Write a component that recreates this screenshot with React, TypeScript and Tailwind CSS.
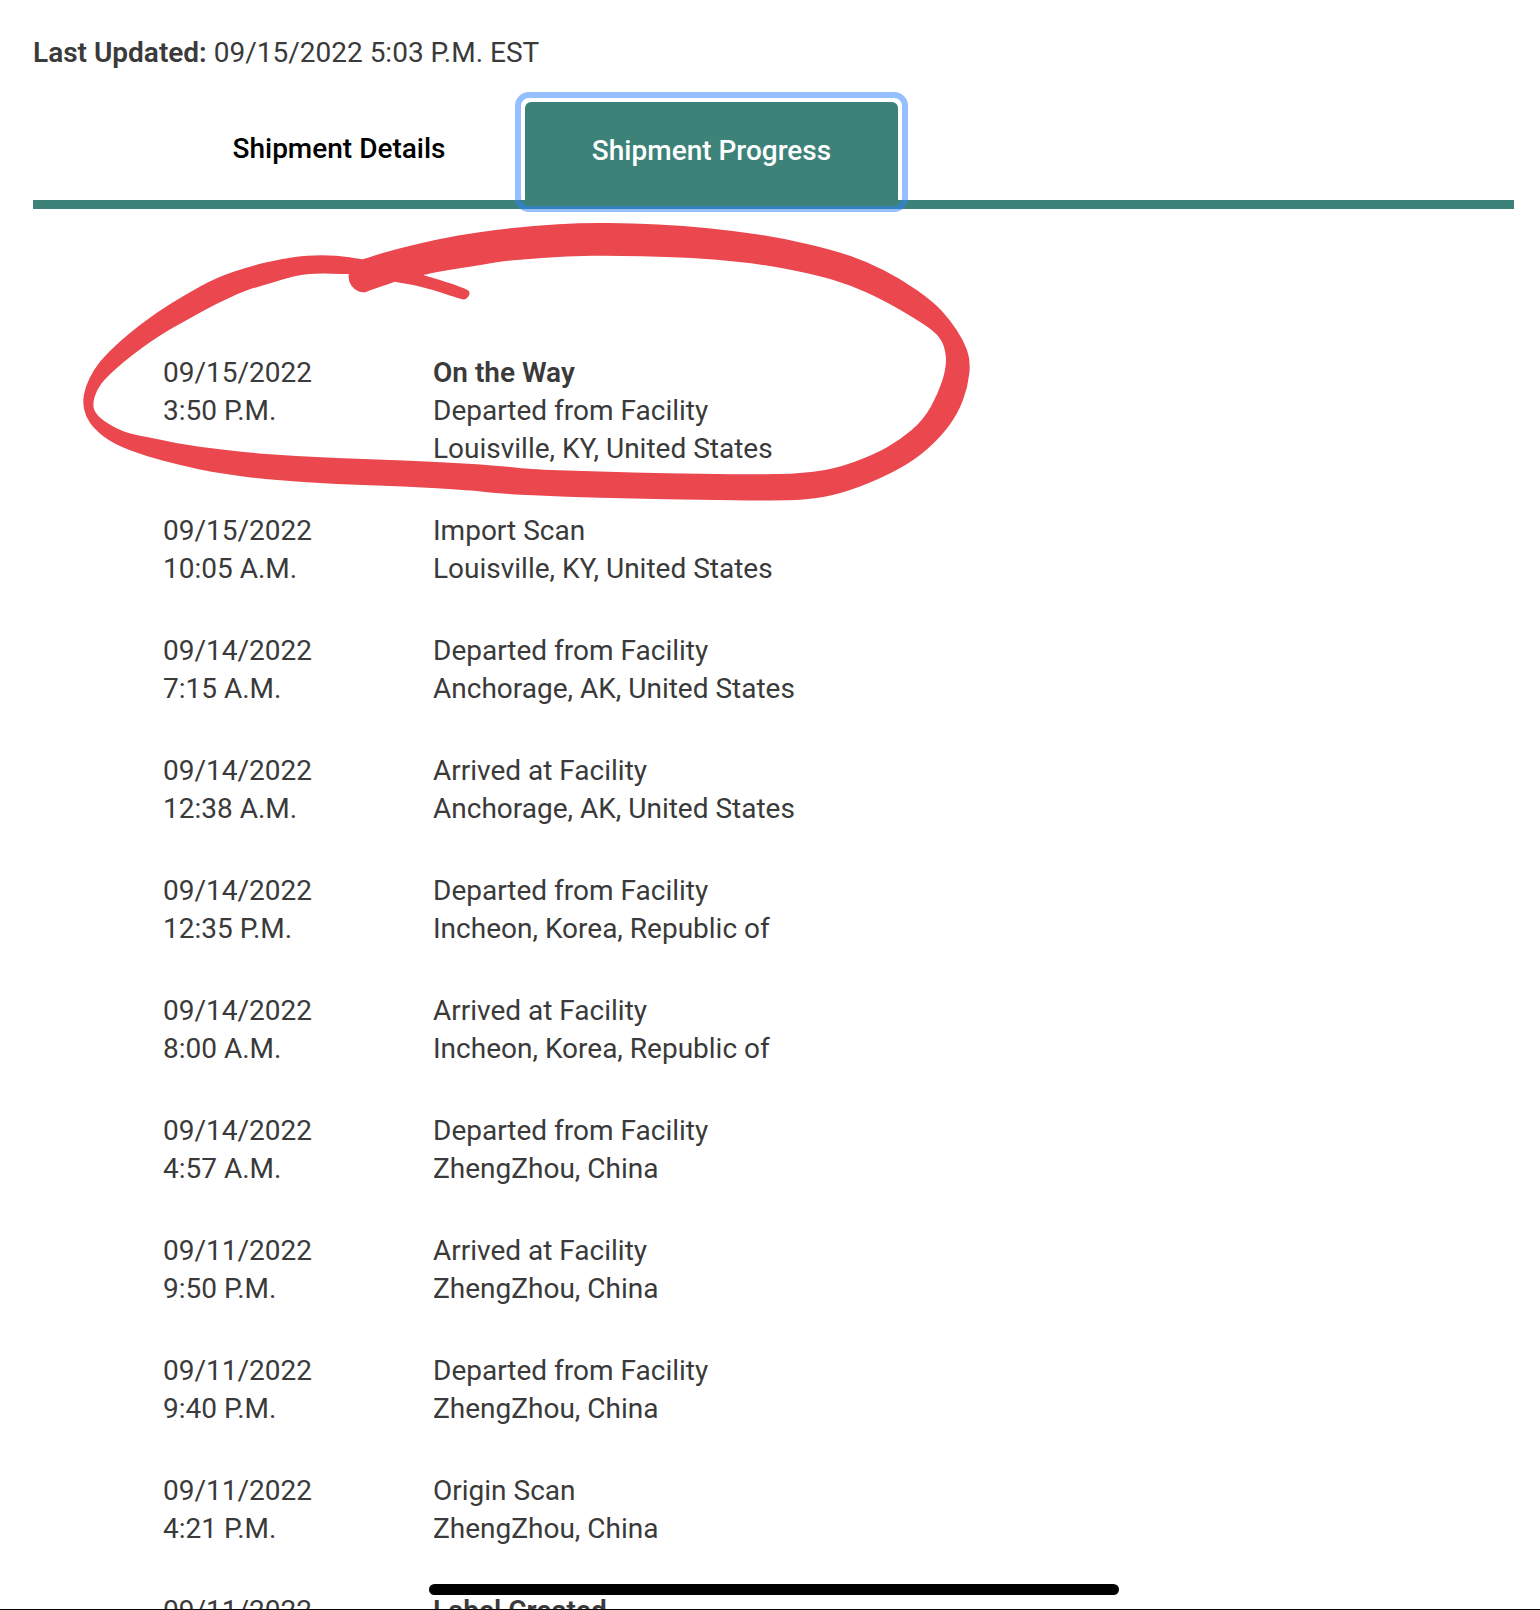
const events = [
  { date: '09/15/2022', time: '3:50 P.M.', title: 'On the Way', lines: ['Departed from Facility', 'Louisville, KY, United States'] },
  { date: '09/15/2022', time: '10:05 A.M.', lines: ['Import Scan', 'Louisville, KY, United States'] },
  { date: '09/14/2022', time: '7:15 A.M.', lines: ['Departed from Facility', 'Anchorage, AK, United States'] },
  { date: '09/14/2022', time: '12:38 A.M.', lines: ['Arrived at Facility', 'Anchorage, AK, United States'] },
  { date: '09/14/2022', time: '12:35 P.M.', lines: ['Departed from Facility', 'Incheon, Korea, Republic of'] },
  { date: '09/14/2022', time: '8:00 A.M.', lines: ['Arrived at Facility', 'Incheon, Korea, Republic of'] },
  { date: '09/14/2022', time: '4:57 A.M.', lines: ['Departed from Facility', 'ZhengZhou, China'] },
  { date: '09/11/2022', time: '9:50 P.M.', lines: ['Arrived at Facility', 'ZhengZhou, China'] },
  { date: '09/11/2022', time: '9:40 P.M.', lines: ['Departed from Facility', 'ZhengZhou, China'] },
  { date: '09/11/2022', time: '4:21 P.M.', lines: ['Origin Scan', 'ZhengZhou, China'] },
  { date: '09/11/2022', time: '', title: 'Label Created', lines: [] },
];

type Pt = [number, number];

// smooth closed outline through the points, a doubled point stays sharp
const smooth = (pts: Pt[]) => {
  const mid = (a: Pt, b: Pt): Pt => [(a[0] + b[0]) / 2, (a[1] + b[1]) / 2];
  let d = `M${mid(pts[pts.length - 1], pts[0]).join(' ')}`;
  pts.forEach((p, i) => {
    d += ` Q${p.join(' ')} ${mid(p, pts[(i + 1) % pts.length]).join(' ')}`;
  });
  return d + ' Z';
};

// red pen loop, 3 units to the pixel
const outer: Pt[] = [
  [878, 148], [878, 148], [960, 122], [1100, 88], [1230, 65], [1390, 47], [1540, 38], [1690, 40], [1840, 47],
  [1990, 62], [2140, 85], [2290, 120], [2390, 155], [2490, 205], [2590, 275], [2640, 330], [2680, 390],
  [2702, 450], [2694, 530], [2664, 610], [2612, 682], [2532, 752], [2430, 807], [2310, 852], [2210, 870],
  [2090, 872], [1890, 869], [1690, 866], [1490, 861], [1290, 851], [1200, 841], [1000, 829], [800, 823],
  [600, 809], [450, 791], [330, 766], [230, 739], [130, 702], [72, 657], [46, 617], [38, 575], [46, 530],
  [72, 478], [108, 433], [168, 378], [258, 308], [348, 253], [438, 203], [548, 166], [640, 146], [710, 136],
  [800, 136],
];

const inner: Pt[] = [
  [1060, 195], [1060, 195], [1190, 235], [1202, 250], [1187, 270], [1170, 266], [1060, 230], [975, 215], [975, 215],
  [900, 241], [880, 249], [853, 240], [836, 215], [836, 192], [836, 192], [740, 190], [680, 195], [600, 220],
  [530, 240], [440, 280], [350, 330], [270, 375], [180, 440], [110, 500], [80, 540], [68, 580], [75, 610],
  [110, 640], [170, 670], [250, 685], [350, 705], [500, 725], [700, 740], [900, 748], [1100, 755], [1290, 768],
  [1390, 778], [1590, 785], [1790, 790], [1990, 793], [2170, 793], [2290, 778], [2410, 735], [2490, 690],
  [2560, 630], [2605, 550], [2630, 470], [2625, 410], [2600, 370], [2550, 335], [2440, 270], [2340, 225],
  [2240, 195], [2090, 165], [1940, 148], [1790, 140], [1640, 137], [1490, 138], [1340, 150], [1290, 155],
  [1200, 170], [1120, 182],
];

const App = () => {
  return (
    <div className="relative h-[1610px] overflow-hidden bg-white font-['Roboto',sans-serif] text-[28px] leading-[38px] text-[#3a3a3a]">
      <div className="pt-[34px] pr-[26px] pl-[33px]">
        <p>
          <span className="font-semibold">Last Updated:</span> 09/15/2022 5:03 P.M. EST
        </p>

        <div className="mt-[30px] flex h-[98px] pl-[120px]">
          <button type="button" className="w-[372px] pb-[4px] font-medium text-black">
            Shipment Details
          </button>
          <button type="button" className="relative w-[373px] rounded-t-[6px] bg-[#3c8279] font-medium text-white">
            Shipment Progress
            <span className="absolute -top-[10px] -right-[10px] -bottom-[12px] -left-[10px] z-10 rounded-[14px] border-[6px] border-blue-500/50" />
          </button>
        </div>
        <div className="h-[9px] bg-[#3c8279]" />

        <div className="flex flex-col gap-[44px] pt-[145px] pl-[130px]">
          {events.map((event, i) => (
            <div key={i} className="flex">
              <div className="w-[270px]">
                <div>{event.date}</div>
                <div>{event.time}</div>
              </div>
              <div>
                {event.title ? <div className="font-semibold">{event.title}</div> : null}
                {event.lines.map(line => (
                  <div key={line}>{line}</div>
                ))}
              </div>
            </div>
          ))}
        </div>
      </div>

      <svg className="absolute top-[210px] left-[70px] h-[300px] w-[930px]" viewBox="0 0 2790 900">
        <path fill="#ea474f" fillRule="evenodd" d={`${smooth(outer)} ${smooth(inner)}`} />
      </svg>

      <div className="absolute top-[1584px] left-[429px] h-[11px] w-[690px] rounded-full bg-black" />
      <div className="absolute right-0 bottom-0 left-0 h-px bg-black" />
    </div>
  );
};

export default App;
